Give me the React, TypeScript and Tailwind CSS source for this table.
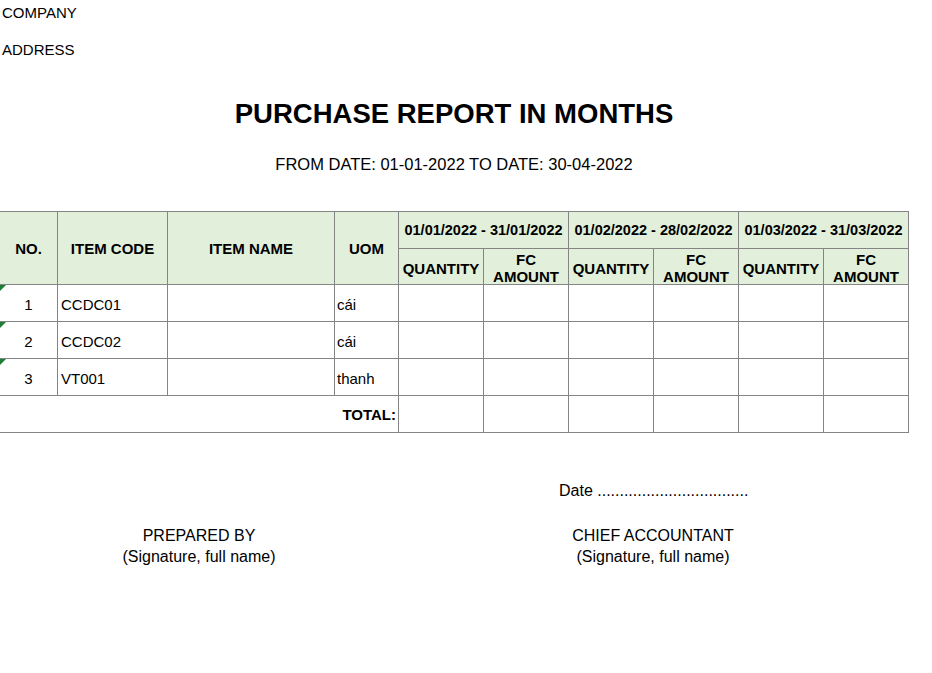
import React from "react";

const font = { fontFamily: '"Liberation Sans", Arial, sans-serif' };

function Tri() {
  return (
    <div className="absolute left-0 top-0 w-0 h-0 border-t-[6px] border-t-[#1e7e34] border-r-[6px] border-r-transparent" />
  );
}

const periods = [
  "01/01/2022 - 31/01/2022",
  "01/02/2022 - 28/02/2022",
  "01/03/2022 - 31/03/2022",
];

const rows = [
  { no: "1", code: "CCDC01", uom: "cái" },
  { no: "2", code: "CCDC02", uom: "cái" },
  { no: "3", code: "VT001", uom: "thanh" },
];

export default function App() {
  const hd = "bg-[#e2efda] flex items-center justify-center text-center font-bold";
  return (
    <div className="w-[932px] h-[673px] bg-white text-black overflow-hidden" style={font}>
      <div className="pl-[2px] pt-[5px] text-[15px] leading-none h-[15px] box-content">COMPANY</div>
      <div className="pl-[2px] mt-[22px] text-[15px] leading-none h-[15px]">ADDRESS</div>
      <div className="mt-[43px] w-[908px] text-center font-bold text-[27.5px] leading-none h-[27px]">
        PURCHASE REPORT IN MONTHS
      </div>
      <div className="mt-[29px] w-[908px] text-center text-[16.5px] leading-none h-[16px]">
        FROM DATE: 01-01-2022 TO DATE: 30-04-2022
      </div>

      <div
        className="mt-[39px] ml-[-1px] w-[910px] grid gap-[1px] p-[1px] bg-[#858585]"
        style={{
          gridTemplateColumns: "57px 109px 166px 63px 84px 84px 84px 84px 84px 84px",
          gridTemplateRows: "36px 35px 36px 36px 36px 36px",
        }}
      >
        <div className={`${hd} row-span-2 text-[15px] leading-none`}>NO.</div>
        <div className={`${hd} row-span-2 text-[15px] leading-none`}>ITEM CODE</div>
        <div className={`${hd} row-span-2 text-[15px] leading-none`}>ITEM NAME</div>
        <div className={`${hd} row-span-2 text-[15px] leading-none`}>UOM</div>
        {periods.map((p) => (
          <div key={p} className={`${hd} col-span-2 text-[14.5px] leading-none pt-[1px]`}>
            {p}
          </div>
        ))}
        {periods.map((p) => (
          <React.Fragment key={p + "s"}>
            <div className={`${hd} text-[15px] leading-none pt-[4px]`}>QUANTITY</div>
            <div className={`${hd} text-[15px] leading-[17px] pt-[2px]`}>
              FC
              <br />
              AMOUNT
            </div>
          </React.Fragment>
        ))}
        {rows.map((r) => (
          <React.Fragment key={r.no}>
            <div className="relative bg-white flex items-center justify-center text-[15px] leading-none pt-[3px]">
              <Tri />
              {r.no}
            </div>
            <div className="bg-white flex items-center pl-[3px] text-[15px] leading-none pt-[3px]">{r.code}</div>
            <div className="bg-white" />
            <div className="bg-white flex items-center pl-[2px] text-[15px] leading-none pt-[3px]">{r.uom}</div>
            {Array.from({ length: 6 }).map((_, i) => (
              <div key={i} className="bg-white" />
            ))}
          </React.Fragment>
        ))}
        <div className="col-span-4 bg-white flex items-center justify-end pr-[2px] font-bold text-[15px] leading-none pt-[1px]">
          TOTAL:
        </div>
        {Array.from({ length: 6 }).map((_, i) => (
          <div key={"t" + i} className="bg-white" />
        ))}
      </div>

      <div className="flex">
        <div className="w-[398px] flex flex-col items-center">
          <div className="h-[16px] mt-[50px]" />
          <div className="mt-[26px] text-center text-[16px] leading-[21px]">
            <div>PREPARED BY</div>
            <div>(Signature, full name)</div>
          </div>
        </div>
        <div className="w-[510px] flex flex-col">
          <div className="mt-[50px] pl-[161px] text-[16px] leading-none h-[16px] whitespace-nowrap">
            Date ..................................
          </div>
          <div className="mt-[26px] text-center text-[16px] leading-[21px]">
            <div>CHIEF ACCOUNTANT</div>
            <div>(Signature, full name)</div>
          </div>
        </div>
      </div>
    </div>
  );
}
